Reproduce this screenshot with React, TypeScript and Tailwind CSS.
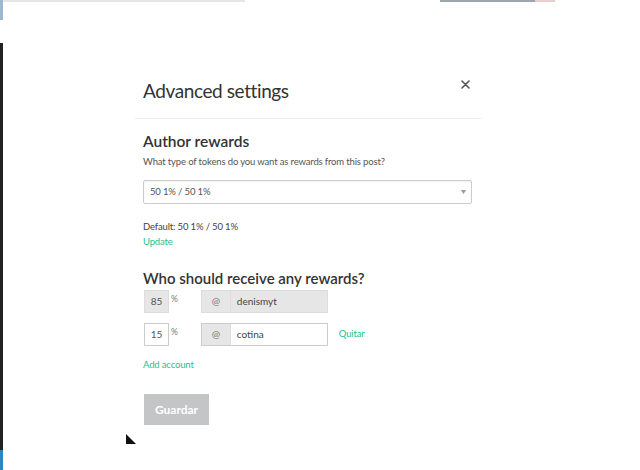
export default function App() {
  return (
    <div className="relative flex h-[470px] w-[640px] overflow-hidden bg-white font-['Lato',sans-serif] text-[#333]">
      {/* left edge of the page behind the dialog */}
      <div className="flex w-[3px] flex-col">
        <div className="h-[20px] bg-[#9fb6d3]" />
        <div className="h-[23px] bg-white" />
        <div className="h-[407px] bg-[#222]" />
        <div className="flex-1 bg-[#2f86bd]" />
      </div>

      <div className="flex flex-1 flex-col">
        <div className="flex h-[2px]">
          <div className="w-[242px] bg-[#e6e6e6]" />
          <div className="w-[195px]" />
          <div className="w-[95px] bg-[#9aa7ad]" />
          <div className="w-[20px] bg-[#e7cfcf]" />
        </div>

        <div className="ml-[132px] mt-[58px] w-[347px]">
          {/* header */}
          <div className="flex items-start justify-between border-b border-[#eee] px-2 pb-[15px] pt-[19px]">
            <h1 className="text-[19px] leading-[24px] tracking-[-0.4px] text-[#333]">Advanced settings</h1>
            <button className="mr-[4px] mt-[1px]">
              <svg width="9" height="9" viewBox="0 0 9 9">
                <path d="M1 1L8 8M8 1L1 8" stroke="#555" strokeWidth="1.6" strokeLinecap="round" />
              </svg>
            </button>
          </div>

          <div className="px-2">
            <h2 className="mt-[12px] text-[15.5px] font-semibold leading-[20px] text-[#333]">Author rewards</h2>
            <p className="mt-[4px] text-[9.5px] leading-[14px] tracking-[-0.15px] text-[#555]">
              What type of tokens do you want as rewards from this post?
            </p>

            <div className="mt-[11px] flex h-[24px] w-[329px] items-center justify-between rounded-[2px] border border-[#ccc] pl-[6px] pr-[5px] text-[9.5px] tracking-[-0.15px] text-[#555] shadow-[inset_0_1px_2px_rgba(0,0,0,0.06)]">
              <span>50 1% / 50 1%</span>
              <svg width="5" height="4" viewBox="0 0 5 4">
                <path d="M0 0H5L2.5 4Z" fill="#999" />
              </svg>
            </div>

            <p className="mt-[16px] text-[9.5px] leading-[14px] tracking-[-0.15px] text-[#444]">Default: 50 1% / 50 1%</p>
            <a className="block text-[9.5px] leading-[16px] tracking-[-0.15px] text-[#1fbf8f]">Update</a>

            <h2 className="mt-[18px] text-[15px] font-semibold leading-[20px] text-[#333]">
              Who should receive any rewards?
            </h2>

            <div className="mt-[2px] flex items-start">
              <div className="ml-[1px] flex h-[23px] w-[25px] items-center justify-center border border-[#ddd] bg-[#e6e6e6] text-[10px] text-[#555]">
                85
              </div>
              <span className="ml-[2px] mt-[3px] text-[8.5px] text-[#777]">%</span>
              <div className="ml-[23px] flex h-[23px] w-[127px] border border-[#ddd]">
                <span className="flex w-[29px] items-center justify-center border-r border-[#ddd] bg-[#e6e6e6] text-[10px] text-[#777]">@</span>
                <span className="flex flex-1 items-center bg-[#e6e6e6] pl-[6px] text-[10px] text-[#444]">denismyt</span>
              </div>
            </div>

            <div className="mt-[10px] flex items-start">
              <div className="ml-[1px] flex h-[23px] w-[25px] items-center justify-center border border-[#ccc] bg-white text-[10px] text-[#555]">
                15
              </div>
              <span className="ml-[2px] mt-[3px] text-[8.5px] text-[#777]">%</span>
              <div className="ml-[23px] flex h-[23px] w-[127px] border border-[#ccc]">
                <span className="flex w-[29px] items-center justify-center border-r border-[#ddd] bg-[#e6e6e6] text-[10px] text-[#777]">@</span>
                <span className="flex flex-1 items-center bg-white pl-[6px] text-[10px] text-[#444]">cotina</span>
              </div>
              <a className="ml-[11px] mt-[4px] text-[9.5px] leading-[14px] tracking-[-0.15px] text-[#1fbf8f]">Quitar</a>
            </div>

            <a className="mt-[11px] block text-[9.5px] leading-[16px] tracking-[-0.15px] text-[#1fbf8f]">Add account</a>

            <button className="ml-[1px] mt-[21px] h-[31px] w-[65px] bg-[#c4c5c7] text-[12px] font-bold text-white">
              Guardar
            </button>
          </div>
        </div>

        <svg className="ml-[123px] mt-[9px]" width="10" height="10" viewBox="0 0 10 10">
          <polygon points="0,0 10,10 0,10" fill="#111" />
        </svg>
      </div>
    </div>
  );
}
